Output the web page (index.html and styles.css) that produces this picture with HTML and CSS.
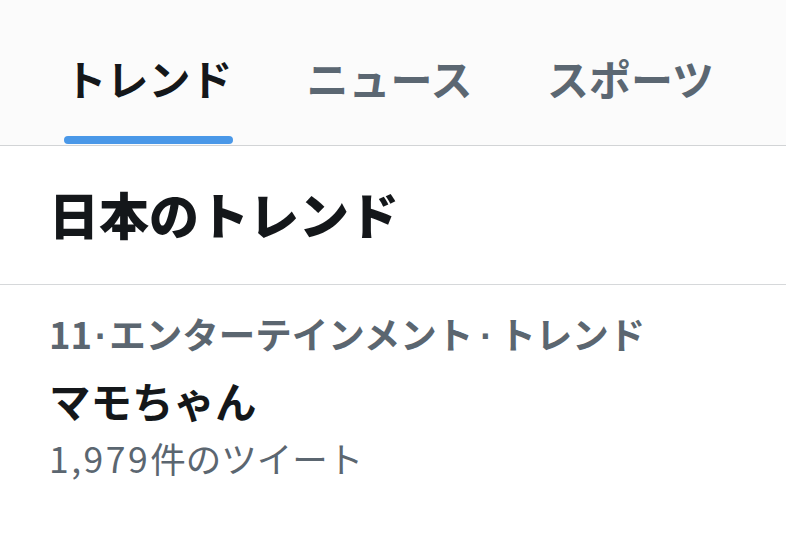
FILE: index.html
```html
<!DOCTYPE html>
<html lang="ja">
<head>
<meta charset="utf-8">
<link rel="stylesheet" href="styles.css">
</head>
<body>
<div class="page">
  <nav class="tabs">
    <div class="tab active"><span class="tab-label">トレンド</span><span class="tab-bar"></span></div>
    <div class="tab"><span class="tab-label">ニュース</span><span class="tab-bar"></span></div>
    <div class="tab"><span class="tab-label">スポーツ</span><span class="tab-bar"></span></div>
  </nav>
  <header class="section-head">
    <h1 class="section-title">日本のトレンド</h1>
  </header>
  <div class="trend">
    <div class="trend-meta"><span class="rank">11</span><span class="dot">·</span><span class="cat">エンターテインメント</span><span class="dot dot-wide">·</span><span class="kind">トレンド</span></div>
    <div class="trend-name">マモちゃん</div>
    <div class="trend-count"><span class="count-num">1,979</span><span class="count-unit">件のツイート</span></div>
  </div>
</div>
</body>
</html>
```
FILE: styles.css
```css
html, body {
  margin: 0;
  padding: 0;
  background: #ffffff;
}
body {
  font-family: "Noto Sans CJK JP", "Noto Sans", sans-serif;
  color: #14171a;
}
.page {
  width: 786px;
  height: 543px;
  overflow: hidden;
}
.tabs {
  display: flex;
  gap: 72px;
  padding-left: 64px;
  height: 145px;
  background: #fbfbfb;
  border-bottom: 1px solid #d2d4d6;
}
.tab {
  width: 169px;
  display: flex;
  flex-direction: column;
  align-items: center;
  padding-top: 53px;
  box-sizing: border-box;
}
.tab-label {
  font-size: 42px;
  line-height: 50px;
  font-weight: 700;
  color: #5b6772;
  white-space: nowrap;
}
.tab.active .tab-label {
  color: #14171a;
}
.tab-bar {
  margin-top: auto;
  margin-bottom: 1px;
  width: 100%;
  height: 8px;
  border-radius: 4px;
}
.tab.active .tab-bar {
  background: #4a98e8;
}
.section-head {
  height: 139px;
  display: flex;
  align-items: center;
  padding-left: 49px;
  padding-bottom: 4px;
  box-sizing: border-box;
  border-bottom: 1px solid #d6d8da;
}
.section-title {
  margin: 0;
  font-size: 50px;
  font-weight: 800;
  line-height: 60px;
  color: #14171a;
}
.trend {
  padding: 29px 0 0 49px;
}
.trend-meta {
  display: flex;
  align-items: baseline;
  font-size: 36.5px;
  line-height: 40px;
  font-weight: 700;
  color: #5b6670;
  white-space: nowrap;
}
.dot {
  font-family: "Liberation Sans", sans-serif;
  margin: 0 2px 0 3px;
}
.dot-wide {
  margin: 0 7px;
}
.trend-name {
  margin-top: 19px;
  font-size: 41.5px;
  line-height: 48px;
  font-weight: 700;
  color: #14171a;
}
.trend-count {
  margin-top: 12px;
  font-size: 35.5px;
  line-height: 44px;
  font-weight: 400;
  color: #5b6670;
  white-space: nowrap;
}
.count-num {
  letter-spacing: 2.5px;
}
.count-unit {
  margin-left: 0;
}
```
